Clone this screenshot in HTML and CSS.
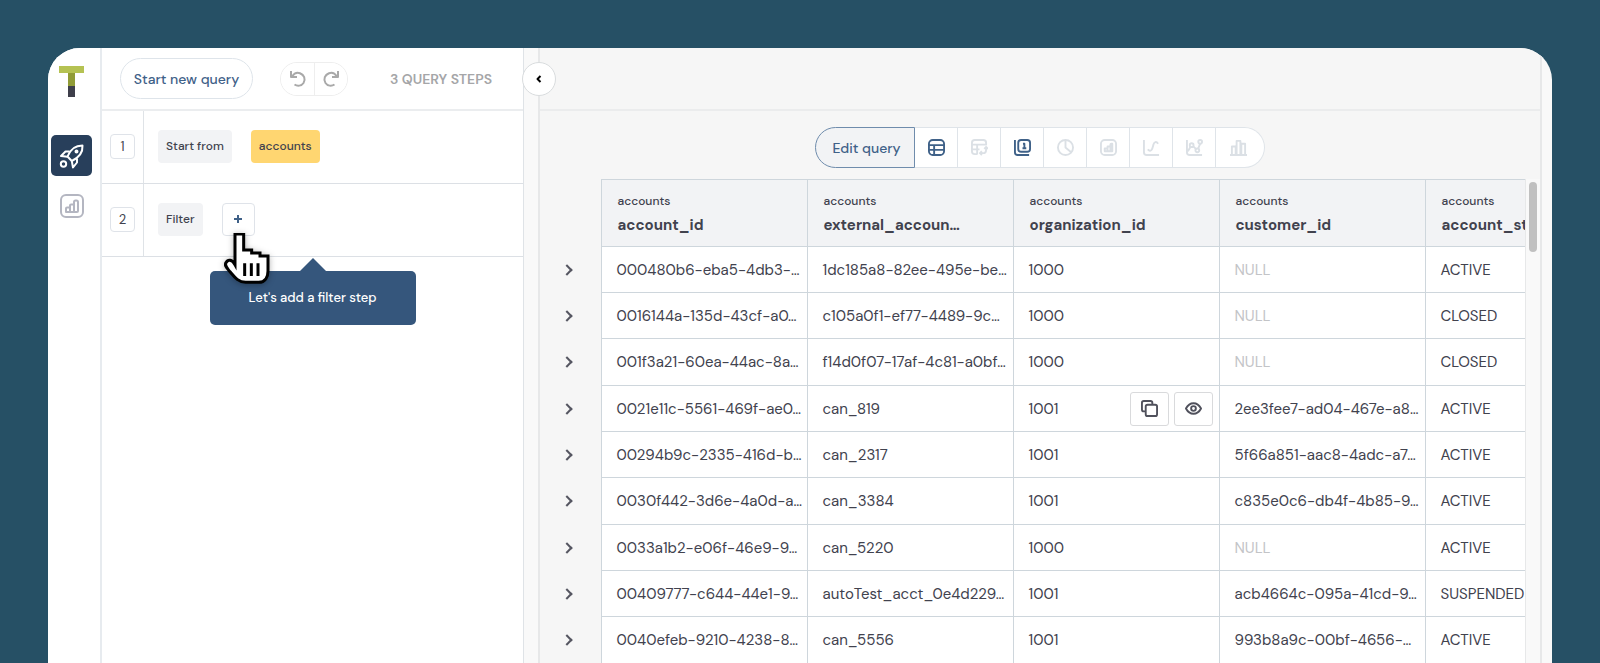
FILE: index.html
```
<!DOCTYPE html>
<html lang="en">
<head>
    <meta charset="UTF-8">
    <meta name="viewport" content="width=device-width, initial-scale=1.0">
    <title>Query builder</title>
    <link rel="stylesheet" href="styles.css">
</head>
<body>
    <div class="app">
        <nav class="sidebar">
            <a href="#" class="logo" aria-label="Home">
                <svg width="25" height="31" viewBox="0 0 25 31">
                    <path d="M0 0h25v7H0z" fill="#b5c253"/>
                    <path d="M9 7h7v13H9z" fill="#919c37"/>
                    <path d="M9 20h7v11H9z" fill="#3e3f4b"/>
                </svg>
            </a>
            <a href="#" class="nav-item active" aria-label="Queries">
                <svg width="26" height="26" viewBox="0 0 26 26">
                    <path d="M8.500 13.500C11 7 16 2.500 23.500 2.500C24 10 19 15 12.800 18Z"/>
                    <path d="M10.500 8.500H6.500L2 13L8.500 13.700M18 15.500V19.500L14 24.500L12.800 18"/>
                    <circle cx="17.500" cy="8.500" r="1"/>
                    <circle cx="4.500" cy="21" r="2.700"/>
                </svg>
            </a>
            <a href="#" class="nav-item" aria-label="Charts">
                <svg width="26" height="26" viewBox="0 0 26 26">
                    <rect x="2" y="2" width="22" height="22" rx="5"/>
                    <path d="M7 19v-3.500a1 1 0 0 1 1-1h3V19zM11 19v-6.500a1 1 0 0 1 1-1h3V19zM15 19V9a1.500 1.500 0 0 1 1.500-1.500h1A1.500 1.500 0 0 1 19 9v9a1 1 0 0 1-1 1z"/>
                </svg>
            </a>
        </nav>

        <section class="query-panel">
            <header class="query-header">
                <button type="button" class="new-query">Start new query</button>
                <div class="history">
                    <button type="button" aria-label="Undo">
                        <svg width="18" height="18" viewBox="0 0 18 18"><path d="M2 1v6h6M3 6.500C5 3.500 8 2 11 3.200C15 4.800 17 9 14.500 13C12.500 16 8.500 16.500 5.500 14.500"/></svg>
                    </button>
                    <button type="button" aria-label="Redo">
                        <svg width="18" height="18" viewBox="0 0 18 18"><path d="M16 1v6h-6M15 6.500C13 3.500 10 2 7 3.200C3 4.800 1 9 3.500 13C5.500 16 9.500 16.500 12.500 14.500"/></svg>
                    </button>
                </div>
                <span class="step-count">3 QUERY STEPS</span>
            </header>
            <div class="step">
                <div class="step-number"><span>1</span></div>
                <div class="step-body">
                    <span class="tag">Start from</span>
                    <button type="button" class="tag source">accounts</button>
                </div>
            </div>
            <div class="step">
                <div class="step-number"><span>2</span></div>
                <div class="step-body">
                    <span class="tag">Filter</span>
                    <div class="add-filter">
                        <button type="button" class="add-btn" aria-label="Add filter">
                            <svg width="8" height="8" viewBox="0 0 8 8"><path d="M4 0v8M0 4h8"/></svg>
                        </button>
                        <div class="tooltip">Let's add a filter step</div>
                        <svg class="pointer" width="46" height="52" viewBox="72 129 138 156">
                            <path d="M105 224V132H131V180H155V189H180V198H204V243C204 260 196 277 176 277H137C113 277 101 258 88 243C79 232 73 226 78 218C84 207 96 208 105 224Z"/>
                            <path d="M134 220V258M154 220V258M174 220V258"/>
                        </svg>
                    </div>
                </div>
            </div>
        </section>

        <main class="results">
            <div class="results-header">
                <button type="button" class="collapse" aria-label="Collapse panel">
                    <svg width="6" height="8" viewBox="0 0 6 8"><path d="M4.500 1L1.500 4L4.500 7"/></svg>
                </button>
            </div>

            <div class="toolbar">
                <button type="button" class="edit-query">Edit query</button>
                <button type="button" class="on" aria-label="Table">
                    <svg width="17" height="17" viewBox="0 0 18 18"><rect x="1" y="1" width="16" height="16" rx="4"/><path d="M1 6.500h16M1 11.500h16M6.500 6.500V17"/></svg>
                </button>
                <button type="button" aria-label="Pivot table">
                    <svg width="17" height="17" viewBox="0 0 18 18"><path d="M7 16H4a3 3 0 0 1-3-3V4a3 3 0 0 1 3-3h9a3 3 0 0 1 3 3v2H1M1 11h8M6.500 6v10M10 15h3q3 0 3-4V9M14 10.500l2-2l2 2M11.500 13l-2 2l2 2"/></svg>
                </button>
                <button type="button" class="on" aria-label="Single value">
                    <svg width="17" height="17" viewBox="0 0 18 18"><rect x="4.500" y="1" width="12.500" height="12.500" rx="3"/><path d="M1 1v13a3 3 0 0 0 3 3h12M9.500 5h1.500v4.500M9 9.800h4"/></svg>
                </button>
                <button type="button" aria-label="Pie chart">
                    <svg width="17" height="17" viewBox="0 0 18 18"><circle cx="9" cy="9" r="8"/><path d="M9 1v8l6 5"/></svg>
                </button>
                <button type="button" aria-label="Bar chart">
                    <svg width="17" height="17" viewBox="0 0 18 18"><rect x="1" y="1" width="16" height="16" rx="4"/><path d="M5 13v-3h3v3zM8 13V8h3v5zM11 13V6q0-1 1-1h1v8z"/></svg>
                </button>
                <button type="button" aria-label="Line chart">
                    <svg width="17" height="17" viewBox="0 0 18 18"><path d="M1 1v13a3 3 0 0 0 3 3h13M5 11c4 4 5-1 6-5c1-3 3-4 5-1"/></svg>
                </button>
                <button type="button" aria-label="Combo chart">
                    <svg width="17" height="17" viewBox="0 0 18 18"><path d="M1 1v13a3 3 0 0 0 3 3h13M2 13l3-5M8 8l3 3M13 10l2-5"/><circle cx="6" cy="6.500" r="2"/><circle cx="12" cy="12" r="2"/><circle cx="15" cy="3" r="2"/></svg>
                </button>
                <button type="button" aria-label="Histogram">
                    <svg width="17" height="17" viewBox="0 0 18 18"><path d="M0 17h18M2 17V8h4v9M7 17V2h4v15M12 17V5h4v12"/></svg>
                </button>
            </div>

            <div class="table-area">
                <div class="table-wrap">
                    <table>
                        <thead>
                            <tr>
                                <td class="expand"></td>
                                <th><small>accounts</small>account_id</th>
                                <th><small>accounts</small>external_accoun…</th>
                                <th><small>accounts</small>organization_id</th>
                                <th><small>accounts</small>customer_id</th>
                                <th><small>accounts</small>account_status</th>
                            </tr>
                        </thead>
                        <tbody>
                            <tr>
                                <td class="expand"><button type="button" aria-label="Expand row"></button></td>
                                <td>000480b6-eba5-4db3-…</td>
                                <td>1dc185a8-82ee-495e-be…</td>
                                <td>1000</td>
                                <td class="null">NULL</td>
                                <td>ACTIVE</td>
                            </tr>
                            <tr>
                                <td class="expand"><button type="button" aria-label="Expand row"></button></td>
                                <td>0016144a-135d-43cf-a0…</td>
                                <td>c105a0f1-ef77-4489-9c…</td>
                                <td>1000</td>
                                <td class="null">NULL</td>
                                <td>CLOSED</td>
                            </tr>
                            <tr>
                                <td class="expand"><button type="button" aria-label="Expand row"></button></td>
                                <td>001f3a21-60ea-44ac-8a…</td>
                                <td>f14d0f07-17af-4c81-a0bf…</td>
                                <td>1000</td>
                                <td class="null">NULL</td>
                                <td>CLOSED</td>
                            </tr>
                            <tr>
                                <td class="expand"><button type="button" aria-label="Expand row"></button></td>
                                <td>0021e11c-5561-469f-ae0…</td>
                                <td>can_819</td>
                                <td>
                                    <div class="cell-tools">
                                        1001
                                        <button type="button" class="copy" aria-label="Copy value">
                                            <svg width="17" height="17" viewBox="0 0 18 18"><path d="M4.500 12H3q-2 0-2-2V3q0-2 2-2h7q2 0 2 2v1.500"/><rect x="5" y="5" width="12" height="12" rx="2"/></svg>
                                        </button>
                                        <button type="button" aria-label="View value">
                                            <svg width="17" height="17" viewBox="0 0 18 18"><path d="M1 9C5 1.500 13 1.500 17 9C13 16.500 5 16.500 1 9Z"/><circle cx="9" cy="9" r="2.500"/></svg>
                                        </button>
                                    </div>
                                </td>
                                <td>2ee3fee7-ad04-467e-a8…</td>
                                <td>ACTIVE</td>
                            </tr>
                            <tr>
                                <td class="expand"><button type="button" aria-label="Expand row"></button></td>
                                <td>00294b9c-2335-416d-b…</td>
                                <td>can_2317</td>
                                <td>1001</td>
                                <td>5f66a851-aac8-4adc-a7…</td>
                                <td>ACTIVE</td>
                            </tr>
                            <tr>
                                <td class="expand"><button type="button" aria-label="Expand row"></button></td>
                                <td>0030f442-3d6e-4a0d-a…</td>
                                <td>can_3384</td>
                                <td>1001</td>
                                <td>c835e0c6-db4f-4b85-9…</td>
                                <td>ACTIVE</td>
                            </tr>
                            <tr>
                                <td class="expand"><button type="button" aria-label="Expand row"></button></td>
                                <td>0033a1b2-e06f-46e9-9…</td>
                                <td>can_5220</td>
                                <td>1000</td>
                                <td class="null">NULL</td>
                                <td>ACTIVE</td>
                            </tr>
                            <tr>
                                <td class="expand"><button type="button" aria-label="Expand row"></button></td>
                                <td>00409777-c644-44e1-9…</td>
                                <td>autoTest_acct_0e4d229…</td>
                                <td>1001</td>
                                <td>acb4664c-095a-41cd-9…</td>
                                <td>SUSPENDED</td>
                            </tr>
                            <tr>
                                <td class="expand"><button type="button" aria-label="Expand row"></button></td>
                                <td>0040efeb-9210-4238-8…</td>
                                <td>can_5556</td>
                                <td>1001</td>
                                <td>993b8a9c-00bf-4656-…</td>
                                <td>ACTIVE</td>
                            </tr>
                        </tbody>
                    </table>
                </div>
                <div class="scrollbar"><div class="thumb"></div></div>
            </div>
        </main>
    </div>
</body>
</html>
```
FILE: styles.css
```
* {
    margin: 0;
    padding: 0;
    box-sizing: border-box;
}

body {
    background-color: #265065;
    height: 100vh;
    padding: 48px 48px 0;
    overflow: hidden;
    font-family: "DM Sans", Inter, sans-serif;
    color: #41424e;
}

button {
    font-family: inherit;
    background-color: white;
    cursor: pointer;
}

svg {
    display: block;
    fill: none;
    stroke: currentColor;
    stroke-width: 2;
    stroke-linejoin: round;
}

.app {
    display: flex;
    height: 100%;
    background-color: #f9f9f9;
    border-radius: 32px 32px 0 0;
    overflow: hidden;
}

/* Sidebar */
.sidebar {
    width: 54px;
    flex-shrink: 0;
    padding: 18px 0 0 3px;
    background-color: white;
    border-right: 2px solid #e7ebef;
}

.logo {
    display: block;
    width: 41px;
    margin-bottom: 38px;
}

.logo svg {
    margin: 0 auto;
    stroke: none;
}

.nav-item {
    display: flex;
    align-items: center;
    justify-content: center;
    width: 41px;
    height: 41px;
    margin-bottom: 9px;
    border-radius: 5px;
    color: #b4b6c1;
}

.nav-item.active {
    background-color: #283f5b;
    color: white;
}

/* Query steps */
.query-panel {
    width: 422px;
    flex-shrink: 0;
    background-color: white;
    border-right: 1px solid #dfe3e7;
}

.query-header {
    display: flex;
    align-items: center;
    height: 63px;
    padding: 0 31px 0 18px;
    border-bottom: 2px solid #ebedef;
}

.new-query {
    width: 133px;
    height: 41px;
    border: 1px solid #dee4ea;
    border-radius: 21px;
    color: #3f6188;
    font-size: 14px;
    font-weight: 500;
}

.history {
    display: flex;
    margin-left: 27px;
    border: 1px solid #eeeeee;
    border-radius: 17px;
    overflow: hidden;
}

.history button {
    display: flex;
    align-items: center;
    justify-content: center;
    width: 33px;
    height: 32px;
    border: none;
    color: #a9a9a9;
}

.history button + button {
    border-left: 1px solid #eeeeee;
}

.step-count {
    margin-left: auto;
    font-size: 14px;
    font-weight: 600;
    color: #a5a6a8;
}

.step {
    display: flex;
    height: 73px;
    border-bottom: 1px solid #dce0e5;
}

.step-number {
    display: flex;
    align-items: center;
    justify-content: center;
    width: 42px;
    padding-bottom: 2px;
    border-right: 1px solid #dfe3e7;
}

.step-number span {
    width: 25px;
    height: 25px;
    border: 1px solid #dfe3e9;
    border-radius: 4px;
    line-height: 23px;
    text-align: center;
    font-size: 13px;
}

.step-body {
    display: flex;
    align-items: center;
    gap: 19px;
    padding: 0 0 2px 14px;
}

.tag {
    height: 33px;
    padding: 0 8px;
    border: none;
    border-radius: 4px;
    background-color: #f2f3f5;
    line-height: 33px;
    font-size: 12px;
    font-weight: 500;
    color: #41424e;
}

.tag.source {
    background-color: #ffd671;
}

.add-filter {
    position: relative;
}

.add-btn {
    display: flex;
    align-items: center;
    justify-content: center;
    width: 33px;
    height: 33px;
    border: 1px solid #dfe3e9;
    border-radius: 4px;
    color: #3f6188;
}

.tooltip {
    position: absolute;
    top: 68px;
    left: -12px;
    width: 206px;
    border-radius: 5px;
    background-color: #35567c;
    color: white;
    line-height: 54px;
    text-align: center;
    font-size: 13px;
    font-weight: 500;
}

.tooltip::before {
    content: '';
    position: absolute;
    bottom: 100%;
    left: 50%;
    margin-left: -13px;
    border: 13px solid transparent;
    border-top-width: 0;
    border-bottom-color: #35567c;
}

.pointer {
    position: absolute;
    top: 30px;
    left: 2px;
    fill: white;
    stroke: black;
    stroke-width: 9;
    stroke-linejoin: miter;
    filter: drop-shadow(0 1px 3px rgba(0, 0, 0, 0.3));
}

/* Results */
.results {
    display: flex;
    flex-direction: column;
    flex: 1;
    min-width: 0;
    margin: 0 10px 0 14px;
    background-color: #f6f6f6;
    border: 2px solid #e7e8e9;
    border-width: 0 2px;
}

.results-header {
    position: relative;
    flex-shrink: 0;
    height: 63px;
    border-bottom: 2px solid #ebeced;
}

.collapse {
    position: absolute;
    top: 14px;
    left: -18px;
    display: flex;
    align-items: center;
    justify-content: center;
    width: 34px;
    height: 34px;
    border: 1px solid #d9dcde;
    border-radius: 50%;
}

.toolbar {
    display: flex;
    align-self: center;
    height: 41px;
    margin: 16px 0 11px;
}

.toolbar button {
    display: flex;
    align-items: center;
    justify-content: center;
    width: 43px;
    border: 1px solid #dfe4e9;
    border-left: none;
    color: #dbe0e5;
}

.toolbar .on {
    color: #3f6188;
}

.toolbar button:last-child {
    width: 49px;
    padding-right: 4px;
    border-radius: 0 21px 21px 0;
}

.toolbar .edit-query {
    width: 100px;
    padding-left: 3px;
    border: 1px solid #6f8cac;
    border-radius: 21px 0 0 21px;
    background-color: #f2f3f5;
    color: #3f6188;
    font-size: 14px;
    font-weight: 500;
}

.table-area {
    display: flex;
    flex: 1;
    min-height: 0;
}

.table-wrap {
    flex: 1;
    min-width: 0;
    overflow: hidden;
}

.scrollbar {
    flex-shrink: 0;
    width: 15px;
    padding: 3px 3px 0;
    background-color: #f9f9f9;
    border-left: 1px solid #e7e8e9;
}

.thumb {
    height: 70px;
    border-radius: 4px;
    background-color: #c0c0c0;
}

table {
    width: 1091px;
    table-layout: fixed;
    border-collapse: collapse;
}

th,
td {
    width: 206px;
    padding-left: 15px;
    border: 1px solid #ced6dc;
    text-align: left;
    white-space: nowrap;
    font-size: 15px;
}

th {
    height: 67px;
    padding-left: 16px;
    background-color: #f2f3f5;
    line-height: 24px;
}

th small {
    display: block;
    font-size: 12px;
    font-weight: 500;
}

td {
    height: 46px;
    background-color: white;
}

tr:nth-child(3n) td {
    height: 47px;
}

td.null {
    color: #c3c4c7;
}

td.expand {
    width: 61px;
    padding: 0;
    border: none;
    background-color: transparent;
}

.expand button {
    display: block;
    width: 24px;
    height: 24px;
    margin: 0 auto;
    border: none;
    background-color: transparent;
}

.expand button::before {
    content: '';
    display: block;
    width: 8px;
    height: 8px;
    margin-left: 5px;
    border: 2px solid #555661;
    border-width: 2px 2px 0 0;
    transform: rotate(45deg);
    box-sizing: border-box;
}

.cell-tools {
    display: flex;
    align-items: center;
    gap: 5px;
    padding-right: 6px;
}

.cell-tools button {
    display: flex;
    align-items: center;
    justify-content: center;
    width: 39px;
    height: 34px;
    border: 1px solid #d9dadc;
    border-radius: 3px;
    color: #50515c;
}

.cell-tools .copy {
    margin-left: auto;
}
```
